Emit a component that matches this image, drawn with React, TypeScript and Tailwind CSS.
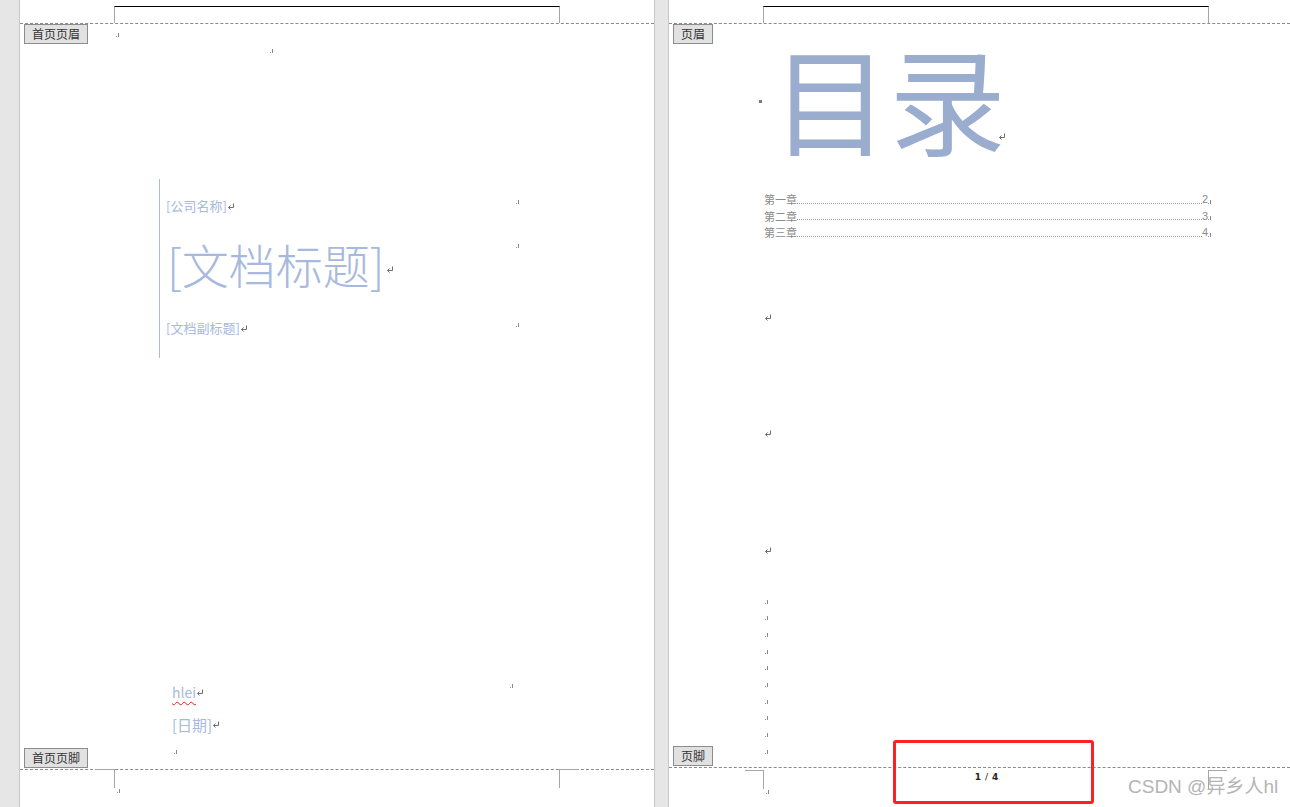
const cjk = "font-['Noto_Sans_CJK_SC','Noto_Sans',sans-serif]";

function CellMark() {
    return (
        <svg width="4" height="5" viewBox="0 0 4 5" className="block">
            <rect x="0" y="4" width="1" height="1" fill="#9a9a9a" />
            <rect x="2" y="1" width="1" height="4" fill="#8a8a8a" />
        </svg>
    );
}

function ReturnMark({ className = '' }: { className?: string }) {
    return (
        <svg width="8" height="7" viewBox="0 0 8 7" className={`inline-block ${className}`}>
            <path d="M6.5 0.5V4.5H1.5 M3.5 2.5L1.5 4.5L3.5 6.5" stroke="#6e6e6e" strokeWidth="1" fill="none" />
        </svg>
    );
}

function Tag({ children }: { children: React.ReactNode }) {
    return (
        <div className={`${cjk} h-[20px] px-[7px] border border-[#8c8c8c] bg-[#e1e1e1] text-[12px] leading-[18px] text-[#333]`}>
            {children}
        </div>
    );
}

function Header() {
    return (
        <div className="h-[24px] border-b border-dashed border-[#8a8a8a] shrink-0">
            <div className="ml-[94px] mt-[6px] w-[446px] h-[17px] border-t border-t-black border-x border-x-[#a6a6a6]" />
        </div>
    );
}

function Footer({ className = '', children }: { className?: string; children?: React.ReactNode }) {
    return (
        <div className={`border-t border-dashed border-[#8a8a8a] shrink-0 ${className}`}>
            <div className="flex">
                <div className="ml-[76px] w-[18px] border-t border-[#a6a6a6]" />
                <div className="w-[446px] h-[19px] border-x border-[#a6a6a6]">{children}</div>
                <div className="w-[18px] border-t border-[#a6a6a6]" />
            </div>
            <div className="ml-[97px]">
                <CellMark />
            </div>
        </div>
    );
}

function CoverPage() {
    return (
        <div className="w-[634px] h-full bg-white flex flex-col relative shrink-0">
            <Header />
            <div className="absolute left-[4px] top-[24px]">
                <Tag>首页页眉</Tag>
            </div>

            <div className="ml-[96px] mt-[8px]">
                <CellMark />
            </div>
            <div className="ml-[250px] mt-[11px]">
                <CellMark />
            </div>

            {/* cover block */}
            <div className={`${cjk} ml-[139px] mt-[126px] w-[362px] h-[179px] border-l border-[#a7badf] text-[#a7b9dd] flex`}>
                <div className="flex-1">
                    <div className="flex items-start pl-[6px] pt-[19px]">
                        <span className="text-[13px] leading-[16px]">[公司名称]</span>
                        <ReturnMark className="mt-[5px]" />
                    </div>
                    <div className="flex items-start pl-[7px] mt-[22px]">
                        <span className="text-[47px] leading-[56px] font-light">[文档标题]</span>
                        <ReturnMark className="mt-[30px] ml-[1px]" />
                    </div>
                    <div className="flex items-start pl-[6px] mt-[28px]">
                        <span className="text-[13px] leading-[16px]">[文档副标题]</span>
                        <ReturnMark className="mt-[5px]" />
                    </div>
                </div>
                <div className="w-[5px] flex flex-col">
                    <div className="mt-[20px]"><CellMark /></div>
                    <div className="mt-[39px]"><CellMark /></div>
                    <div className="mt-[74px]"><CellMark /></div>
                </div>
            </div>

            <div className="flex-1" />

            {/* author / date */}
            <div className={`${cjk} ml-[152px] w-[342px] text-[#a7b9dd]`}>
                <div className="flex items-start">
                    <span className="text-[14px] leading-[18px] underline decoration-wavy decoration-[#e02020] decoration-1 underline-offset-[3px]">hlei</span>
                    <ReturnMark className="mt-[6px]" />
                    <div className="ml-auto"><CellMark /></div>
                </div>
                <div className="flex items-start mt-[14px]">
                    <span className="text-[15px] leading-[20px]">[日期]</span>
                    <ReturnMark className="mt-[6px]" />
                </div>
                <div className="ml-[2px] mt-[14px] mb-[15px]">
                    <CellMark />
                </div>
            </div>

            <div className="absolute left-[4px] top-[748px]">
                <Tag>首页页脚</Tag>
            </div>
            <Footer className="h-[38px] [&>div:first-child]:-mt-px" />
        </div>
    );
}

const toc = [
    { name: '第一章', page: '2' },
    { name: '第二章', page: '3' },
    { name: '第三章', page: '4' },
];

function TocPage() {
    return (
        <div className="flex-1 h-full bg-white flex flex-col relative">
            <Header />
            <div className="absolute left-[4px] top-[24px]">
                <Tag>页眉</Tag>
            </div>

            {/* title */}
            <div className="flex items-start ml-[90px] mt-[-6px]">
                <div className="w-[3px] h-[3px] bg-[#7a7a7a] mt-[82px]" />
                <span className={`${cjk} ml-[10px] text-[117px] leading-[156px] text-[#9aadcf]`}>目录</span>
                <ReturnMark className="mt-[115px] ml-[-8px]" />
            </div>

            {/* table of contents */}
            <div className={`${cjk} ml-[95px] w-[448px] mt-[17px] text-[11px] leading-[16.5px] text-[#8c8c8c]`}>
                {toc.map((row) => (
                    <div key={row.name} className="flex items-end">
                        <span>{row.name}</span>
                        <span className="flex-1 mb-[4px] border-b border-dotted border-[#9a9a9a]" />
                        <span className="font-['Liberation_Sans',sans-serif]">{row.page}</span>
                        <div className="mb-[4px]"><CellMark /></div>
                    </div>
                ))}
            </div>

            <div className="ml-[95px]">
                <ReturnMark className="mt-[73px]" />
            </div>
            <div className="ml-[95px]">
                <ReturnMark className="mt-[109px]" />
            </div>
            <div className="ml-[95px]">
                <ReturnMark className="mt-[110px]" />
            </div>

            <div className="ml-[96px] mt-[45px] flex flex-col gap-[11.7px]">
                {Array.from({ length: 10 }).map((_, i) => (
                    <CellMark key={i} />
                ))}
            </div>

            <div className="flex-1" />

            <div className="absolute left-[4px] top-[746px]">
                <Tag>页脚</Tag>
            </div>
            <Footer className="h-[40px] pt-[2px]">
                <div className="flex justify-center items-baseline gap-[4px] pt-[1px] pl-[3px] font-['DejaVu_Sans',sans-serif] text-[9px] leading-[12px] font-bold text-[#222]">
                    <span>1</span>
                    <span className="font-normal">/</span>
                    <span>4<span className="font-normal text-[#999] text-[6px]">.</span></span>
                </div>
            </Footer>

            {/* annotation */}
            <div className="absolute left-[224px] top-[740px] w-[201px] h-[64px] border-[3px] border-[#ff2121] rounded-[3px]" />
            <div className="absolute left-[459px] top-[775px] font-['Liberation_Sans','Noto_Sans_CJK_SC',sans-serif] text-[19px] leading-[24px] text-[#b4b4b4]">
                CSDN @异乡人hl
            </div>
        </div>
    );
}

export default function App() {
    return (
        <div className="w-[1290px] h-[807px] flex bg-[#e6e6e6] overflow-hidden">
            <div className="w-[20px] h-full border-r border-[#c8c8c8] shrink-0" />
            <CoverPage />
            <div className="w-[15px] h-full border-x border-[#c8c8c8] shrink-0" />
            <TocPage />
        </div>
    );
}
